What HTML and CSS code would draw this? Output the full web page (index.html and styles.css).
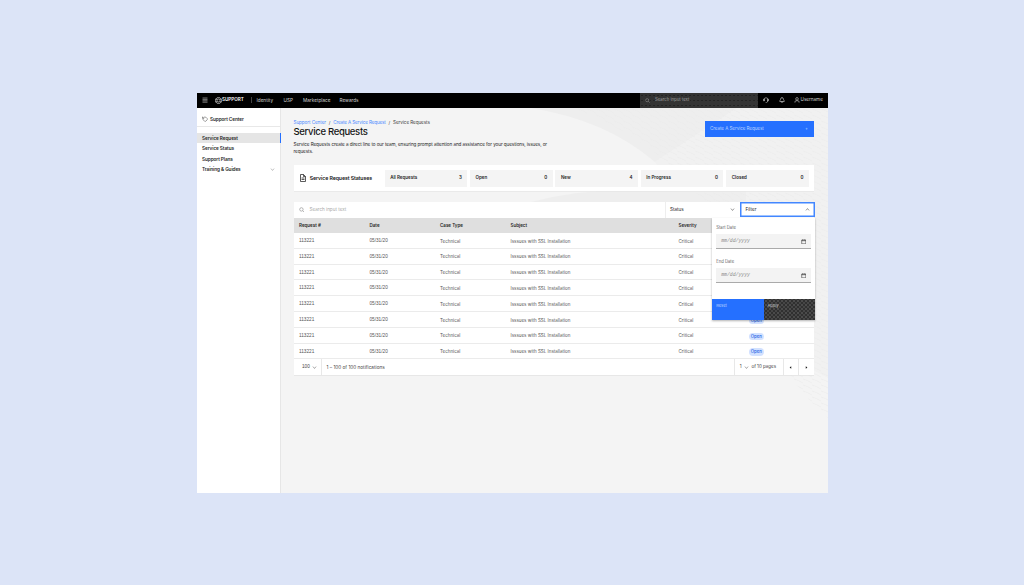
FILE: index.html
```html
<!DOCTYPE html>
<html lang="en">
<head>
<meta charset="utf-8">
<title>Service Requests</title>
<link rel="stylesheet" href="styles.css">
</head>
<body>
<div class="window">
  <header class="topbar">
    <svg class="burger" viewBox="0 0 6 6"><path d="M.5 1h5M.5 2.4h5M.5 3.8h5M.5 5.2h5"/></svg>
    <div class="brand">
      <svg viewBox="0 0 16 16"><path d="M5 1.500h6L15 8l-4 6.500H5L1 8z"/><circle cx="8" cy="8" r="3.300"/><path d="M0 5h4M12 5h4M0 11h4M12 11h4"/></svg>
      <span>SUPPORT</span>
    </div>
    <nav class="topnav"><a class="n1">Identity</a><a class="n2">USP</a><a class="n3">Marketplace</a><a>Rewards</a></nav>
    <div class="global-search">
      <svg class="icon" viewBox="0 0 16 16"><circle cx="7" cy="7" r="5"/><path d="m11 11 4 4"/></svg>
      <span>Search input text</span>
    </div>
    <svg class="icon top-support" viewBox="0 0 16 16"><path d="M3 10V7a5 5 0 0 1 10 0v3M3 6H1v4h3V6M13 6h2v4h-3V6M12 10v3l-3 2H7"/></svg>
    <svg class="icon top-bell" viewBox="0 0 16 16"><path d="M2 12v-2l2-2V6a4 4 0 0 1 8 0v2l2 2v2zM6 12v2h4v-2M8 2V0"/></svg>
    <svg class="icon top-user" viewBox="0 0 16 16"><circle cx="8" cy="5" r="3.500"/><path d="M2.500 15v-2q0-3 3-3h5q3 0 3 3v2"/></svg>
    <span class="username">Username</span>
  </header>
  <div class="body">
    <aside class="sidebar">
      <div class="side-title"><svg class="icon" viewBox="0 0 16 16"><path d="M5 3h5l4 4v3l-4 4H7L3 10V6M1 2v4h4M1 2l4 4"/></svg><span>Support Center</span></div>
      <ul class="side-list">
        <li class="active"><span>Service Request</span></li>
        <li><span>Service Status</span></li>
        <li><span>Support Plans</span></li>
        <li><span>Training &amp; Guides</span><svg class="icon chev" viewBox="0 0 16 16"><path d="m3 5 5 6 5-6"/></svg></li>
      </ul>
    </aside>
    <main class="main">
      <svg class="backdrop" viewBox="0 0 547 384" preserveAspectRatio="none">
        <defs><pattern id="waves" width="9" height="6" patternUnits="userSpaceOnUse"><path d="M0 1q4 1 9 4" class="wave"/></pattern></defs>
        <path class="tone-a" d="M250 0q75 12 124 54l82-54z"/>
        <path class="tone-b" d="M374 54 456 0h91v270q-40-20-80-60z"/>
        <path class="tone-a" d="M250 94q45-12 95-12h120v12z"/>
        <path fill="url(#waves)" d="M290 0h257v310q-70-60-120-210-50-70-137-100z"/>
      </svg>
      <section class="page-head">
        <div class="intro">
          <div class="crumbs"><a>Support Center</a><i>/</i><a class="current-parent">Create A Service Request</a><i>/</i><span>Service Requests</span></div>
          <h1>Service Requests</h1>
          <p>Service Requests create a direct line to our team, ensuring prompt attention and assistance for your questions, issues, or<br>requests.</p>
        </div>
        <button class="create"><span>Create A Service Request</span><b>+</b></button>
      </section>
      <section class="statuses">
        <svg class="icon doc" viewBox="0 0 16 16"><path d="M3 1h6l4 4v10H3zM9 1v4h4M5 8h6M5 11h6"/></svg>
        <h2>Service Request Statuses</h2>
        <div class="card"><span>All Requests</span><span>3</span></div>
        <div class="card"><span>Open</span><span>0</span></div>
        <div class="card"><span>New</span><span>4</span></div>
        <div class="card"><span>In Progress</span><span>0</span></div>
        <div class="card"><span>Closed</span><span>0</span></div>
      </section>
      <section class="table-panel">
        <div class="toolbar">
          <div class="search"><svg class="icon" viewBox="0 0 16 16"><circle cx="7" cy="7" r="5"/><path d="m11 11 4 4"/></svg><span>Search input text</span></div>
          <div class="select status"><span>Status</span><svg class="icon chev" viewBox="0 0 16 16"><path d="m3 5 5 6 5-6"/></svg></div>
          <div class="select filter"><span>Filter</span><svg class="icon chev" viewBox="0 0 16 16"><path d="m3 11 5-6 5 6"/></svg></div>
        </div>
        <div class="row head"><span>Request #</span><span>Date</span><span>Case Type</span><span>Subject</span><span>Severity</span><span></span></div>
        <div class="row"><span class="num">113221</span><span class="num">05/31/20</span><span>Technical</span><span>Isssues with SSL Installation</span><span>Critical</span><span><em>Open</em></span></div>
        <div class="row"><span class="num">113221</span><span class="num">05/31/20</span><span>Technical</span><span>Isssues with SSL Installation</span><span>Critical</span><span><em>Open</em></span></div>
        <div class="row"><span class="num">113221</span><span class="num">05/31/20</span><span>Technical</span><span>Isssues with SSL Installation</span><span>Critical</span><span><em>Open</em></span></div>
        <div class="row"><span class="num">113221</span><span class="num">05/31/20</span><span>Technical</span><span>Isssues with SSL Installation</span><span>Critical</span><span><em>Open</em></span></div>
        <div class="row"><span class="num">113221</span><span class="num">05/31/20</span><span>Technical</span><span>Isssues with SSL Installation</span><span>Critical</span><span><em>Open</em></span></div>
        <div class="row"><span class="num">113221</span><span class="num">05/31/20</span><span>Technical</span><span>Isssues with SSL Installation</span><span>Critical</span><span><em>Open</em></span></div>
        <div class="row"><span class="num">113221</span><span class="num">05/31/20</span><span>Technical</span><span>Isssues with SSL Installation</span><span>Critical</span><span><em>Open</em></span></div>
        <div class="row"><span class="num">113221</span><span class="num">05/31/20</span><span>Technical</span><span>Isssues with SSL Installation</span><span>Critical</span><span><em>Open</em></span></div>
        <div class="pager">
          <div class="page-size"><span class="num">100</span><svg class="icon chev" viewBox="0 0 16 16"><path d="m3 5 5 6 5-6"/></svg></div>
          <span class="range">1 – 100 of 100 notifications</span>
          <div class="page-no"><span>1</span><svg class="icon chev" viewBox="0 0 16 16"><path d="m3 5 5 6 5-6"/></svg><span>of 10 pages</span></div>
          <div class="step"><svg viewBox="0 0 4 4"><path d="M3 .3v3.400L.8 2z"/></svg></div>
          <div class="step"><svg viewBox="0 0 4 4"><path d="M1 .3v3.400L3.200 2z"/></svg></div>
        </div>
        <div class="menu">
          <label>Start Date</label>
          <div class="date"><span>mm/dd/yyyy</span><svg class="icon" viewBox="0 0 16 16"><path d="M2 3h12v11H2zM2 5h12M5 1v3M11 1v3"/></svg></div>
          <label>End Date</label>
          <div class="date"><span>mm/dd/yyyy</span><svg class="icon" viewBox="0 0 16 16"><path d="M2 3h12v11H2zM2 5h12M5 1v3M11 1v3"/></svg></div>
          <div class="actions"><button class="reset">Reset</button><button class="apply">Apply</button></div>
        </div>
      </section>
    </main>
  </div>
</div>
</body>
</html>
```
FILE: styles.css
```css
* { box-sizing: border-box; }
body {
  margin: 0;
  height: 585px;
  padding: 92.5px 196px 0 197px;
  background: #dce4f7;
  font-family: Inter, "Liberation Sans", sans-serif;
  font-size: 4.5px;
  line-height: 6px;
  color: #262626;
  overflow: hidden;
}
button { border: 0; padding: 0; font: inherit; text-align: left; }
.window { width: 631px; height: 400px; display: flex; flex-direction: column; background: #f4f4f4; }
.icon { display: block; flex: none; width: 6px; height: 6px; fill: none; stroke: currentColor; stroke-width: 1.5; }
.chev { width: 5px; height: 5px; }
.num { font-family: "Liberation Sans", sans-serif; font-size: 4.7px; }

.topbar { height: 15.5px; flex: none; display: flex; align-items: center; background: #000; color: #d0d0d0; padding-left: 5px; }
.burger { width: 6px; height: 6px; stroke: #aaa; stroke-width: .7; flex: none; }
.brand { display: flex; align-items: center; margin-left: 6.5px; width: 36.500px; color: #fff; font-weight: 600; font-size: 4.6px; }
.brand svg { width: 7px; height: 7px; margin-right: .5px; fill: none; stroke: #ddd; stroke-width: 1.5; }
.topnav { display: flex; border-left: 1px solid #444; height: 6px; padding-left: 4.5px; width: 388.5px; font-size: 4.7px; }
.n1 { width: 27px; }
.n2 { width: 19.5px; }
.n3 { width: 36.5px; }
.global-search {
  display: flex; align-items: center; width: 118px; height: 15.5px; padding-left: 5px; gap: 5.5px; color: #a0a0a0; font-size: 4.3px;
  background: radial-gradient(circle, #1c1c1c .4px, transparent .7px) 0 0 / 4px 5px, #333;
}
.global-search .icon { width: 5px; height: 5px; }
.top-support { margin-left: 5px; color: #ddd; }
.top-bell { margin-left: 10px; color: #ddd; }
.top-user { margin-left: 9px; color: #ddd; }
.username { margin-left: 1px; font-size: 4.6px; }

.body { flex: 1; display: flex; min-height: 0; }
.sidebar { position: relative; z-index: 1; width: 84px; background: #fff; border-right: 1px solid #e6e6e6; font-weight: 600; font-size: 4.7px; letter-spacing: -.07px; }
.side-title { height: 19px; display: flex; align-items: center; padding: 4px 0 0 5px; gap: 2px; border-bottom: 1px solid #e8e8e8; }
.side-title .icon { width: 6px; height: 6px; color: #555; }
.side-list { list-style: none; margin: 0; padding: 5.5px 0 0; }
.side-list li { height: 10.5px; display: flex; align-items: center; justify-content: space-between; padding: 0 5.5px 0 5px; }
.side-list .chev { color: #777; }
.side-list .active { background: #e5e5e5; border-right: 1px solid #2570ff; margin-right: -1px; }

.main { flex: 1; position: relative; padding: 11px 14px 0 12.5px; }
.backdrop { position: absolute; left: 0; top: 0; width: 547px; height: 384px; }
.tone-a { fill: #eee; }
.tone-b { fill: #f1f1f1; }
.wave { fill: none; stroke: #ebebeb; stroke-width: .6; }
.page-head, .statuses, .table-panel { position: relative; }
.page-head { height: 46px; display: flex; justify-content: space-between; }
.crumbs { display: flex; padding-top: .6px; font-size: 4.6px; letter-spacing: -.06px; color: #444; }
.crumbs a { color: #4b8aff; }
.crumbs .current-parent { letter-spacing: -.13px; }
.crumbs i { width: 7.3px; text-align: center; font-style: normal; }
h1 { margin: .4px 0 0; font-size: 9.5px; line-height: 12px; font-weight: 500; letter-spacing: -.32px; color: #161616; }
p { margin: 4.2px 0 0; font-size: 4.6px; line-height: 6.7px; letter-spacing: -.07px; }
.create { width: 109px; height: 16px; margin-top: 1.5px; padding: 0 6px 0 5px; display: flex; align-items: center; justify-content: space-between; background: #2570ff; color: #b8d1ff; font-size: 4.6px; letter-spacing: -.08px; }
.create b { font-weight: 400; }

.statuses { height: 26px; display: flex; align-items: center; background: #fff; padding-left: 5.5px; gap: 2.7px; box-shadow: 0 .7px 0 #e5e5e5; }
.doc { width: 8px; height: 8px; }
h2 { margin: 0; width: 72.3px; font-size: 5.2px; line-height: 7px; font-weight: 600; letter-spacing: -.08px; white-space: nowrap; color: #161616; }
.card { width: 82.7px; height: 17px; flex: none; display: flex; align-items: center; justify-content: space-between; padding: 0 5.5px; background: #f4f4f4; font-weight: 600; }

.table-panel { margin-top: 10.5px; background: #fff; box-shadow: 0 .7px 0 #e2e2e2; }
.toolbar { height: 16px; display: flex; }
.search { flex: 1; display: flex; align-items: center; padding-left: 5.5px; gap: 5px; color: #777; }
.search span { color: #aaa; font-size: 4.6px; }
.search .icon { width: 5.5px; height: 5.5px; }
.select { width: 75px; display: flex; align-items: center; justify-content: space-between; padding: 0 5px 0 4px; border-left: 1px solid #eee; font-size: 4.6px; }
.filter { border: 0; box-shadow: inset 0 0 0 1.5px #4387ff; padding: .5px 5.5px 0; height: 15.5px; margin-right: -1px; }
.row { display: grid; grid-template-columns: 70.5px 70.5px 70.5px 168px 70.5px 1fr; align-items: center; height: 15.8px; padding: 2.4px 0 0 5.5px; border-bottom: 1px solid #ebebeb; color: #555; }
.row .num { margin-top: -1px; }
.head { height: 15.5px; padding-top: .8px; background: #dfdfdf; border: 0; font-weight: 600; color: #262626; }
.row em { display: block; width: 14.5px; height: 7.5px; line-height: 7.5px; border-radius: 4px; text-align: center; font-style: normal; font-weight: 500; background: #d2e1ff; color: #2467e5; font-size: 4.3px; }
.pager { display: flex; align-items: stretch; height: 15.5px; line-height: 16.5px; color: #444; }
.page-size { display: flex; align-items: center; width: 28px; padding-left: 8.5px; gap: 2.5px; border-right: 1px solid #e8e8e8; }
.range { flex: 1; padding-left: 5px; font-size: 4.7px; }
.page-no { display: flex; align-items: center; width: 49px; padding-left: 5px; border-left: 1px solid #e8e8e8; gap: 2.5px; }
.step { width: 15.7px; display: flex; align-items: center; justify-content: center; border-left: 1px solid #e8e8e8; }
.step svg { width: 3px; height: 3px; fill: #161616; }

.menu { position: absolute; right: -1px; top: 16px; width: 102.8px; height: 102px; padding-top: 7.5px; background: #fff; box-shadow: 0 .7px 2px rgba(0,0,0,.3); display: flex; flex-direction: column; font-size: 4.2px; }
.menu label { height: 8.5px; padding-left: 4px; color: #666; }
.date { display: flex; align-items: center; justify-content: space-between; height: 15.5px; margin: 0 3.8px 10px 4px; padding: 1px 5px 0; background: #f3f3f3; border-bottom: 1px solid #aaa; color: #888; font: italic 4.8px/6px "Liberation Mono", monospace; }
.date .icon { width: 5.5px; height: 5.5px; color: #222; }
.actions { display: flex; height: 21px; margin-top: auto; }
.actions button { flex: 1; display: flex; padding: 4px; color: #bcd3ff; font-size: 4px; }
.reset { background: #2570ff; }
.actions .apply { color: #ccc; background: radial-gradient(circle, #888 .5px, transparent .8px) 0 0 / 4px 4px, radial-gradient(circle, #777 .5px, transparent .8px) 2px 2px / 4px 4px, #303030; }
```
